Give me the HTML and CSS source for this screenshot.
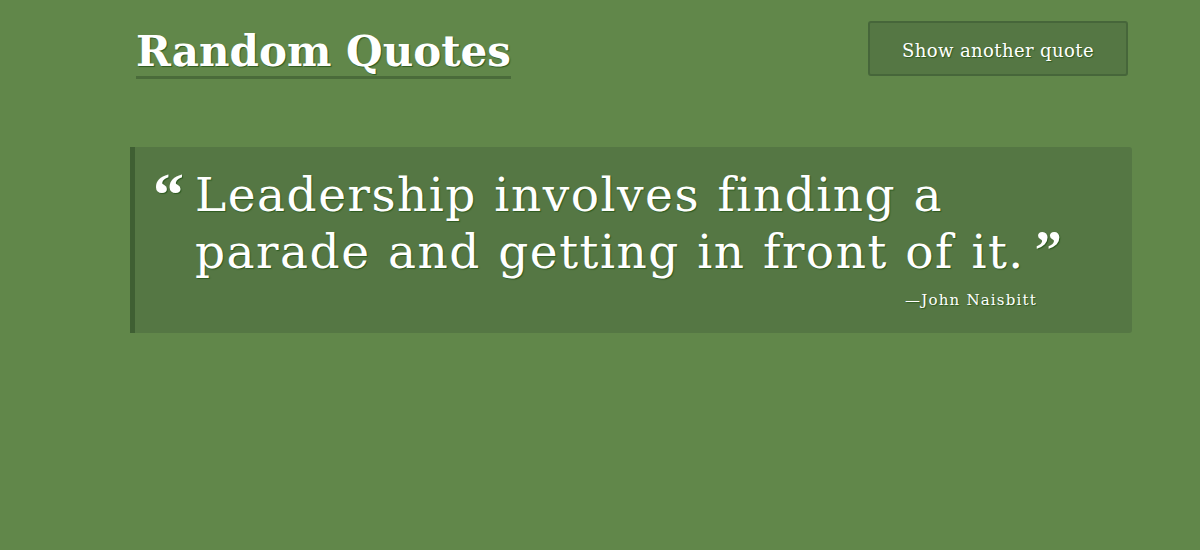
FILE: index.html
```html
<!DOCTYPE html>
<html lang="en">
<head>
<meta charset="utf-8">
<title>Random Quotes</title>
<link rel="stylesheet" href="styles.css">
</head>
<body>
<div class="page">
  <header class="header">
    <h1 class="title">Random Quotes</h1>
    <button class="btn" type="button">Show another quote</button>
  </header>
  <blockquote class="card">
    <div class="quote-row">
      <span class="open-mark">&ldquo;</span>
      <p class="quote-text">Leadership involves finding a parade and getting in front of <span class="nowrap">it.<span class="close-mark">&rdquo;</span></span></p>
    </div>
    <footer class="author">&mdash;John Naisbitt</footer>
  </blockquote>
</div>
</body>
</html>
```
FILE: styles.css
```css
html, body {
  margin: 0;
  padding: 0;
  background: #61874a;
  height: 100%;
}
body {
  font-family: "DejaVu Serif", "Liberation Serif", serif;
  color: #fff;
}
.page {
  width: 1002px;
  margin-left: 130px;
  padding-top: 21px;
}
.header {
  display: flex;
  justify-content: space-between;
  align-items: flex-start;
  padding: 0 4px 0 6px;
}
.title {
  margin: 8px 0 0;
  font-size: 42px;
  font-weight: bold;
  line-height: 46px;
  padding-bottom: 1px;
  border-bottom: 3px solid #4a6b3a;
  text-shadow: 1px 1px 1px #2e5a20;
}
.btn {
  font-family: inherit;
  font-size: 18px;
  letter-spacing: 0.4px;
  color: #fff;
  background: #557744;
  border: 2px solid #46663a;
  border-radius: 3px;
  width: 260px;
  height: 55px;
  padding: 4px 0 0;
  text-shadow: 1px 1px 1px #2e5a20;
  cursor: pointer;
}
.card {
  box-sizing: border-box;
  margin: 68px 0 0;
  background: #557744;
  border-left: 5px solid #3f5f33;
  border-radius: 0 3px 3px 0;
  padding: 19px 20px 0 20px;
  height: 186px;
}
.quote-row {
  display: flex;
  align-items: flex-start;
}
.open-mark {
  width: 40px;
  flex: none;
  font-family: "Liberation Serif", serif;
  font-size: 62px;
  font-weight: bold;
  line-height: 57px;
  margin-left: -2px;
  margin-right: 2px;
  text-shadow: 1px 1px 1px #2e5a20;
}
.quote-text {
  margin: 0;
  flex: 1;
  font-size: 47px;
  line-height: 57px;
  letter-spacing: 1.5px;
  word-spacing: 1px;
  text-shadow: 1px 1px 1px #2e5a20;
}
.nowrap {
  white-space: nowrap;
}
.close-mark {
  font-family: "Liberation Serif", serif;
  font-weight: bold;
  font-size: 54px;
  line-height: 40px;
  letter-spacing: 0;
  margin-left: 10px;
}
.author {
  text-align: right;
  font-size: 15px;
  letter-spacing: 1.2px;
  margin: 11px 75px 0 0;
  text-shadow: 1px 1px 1px #2e5a20;
}
```
